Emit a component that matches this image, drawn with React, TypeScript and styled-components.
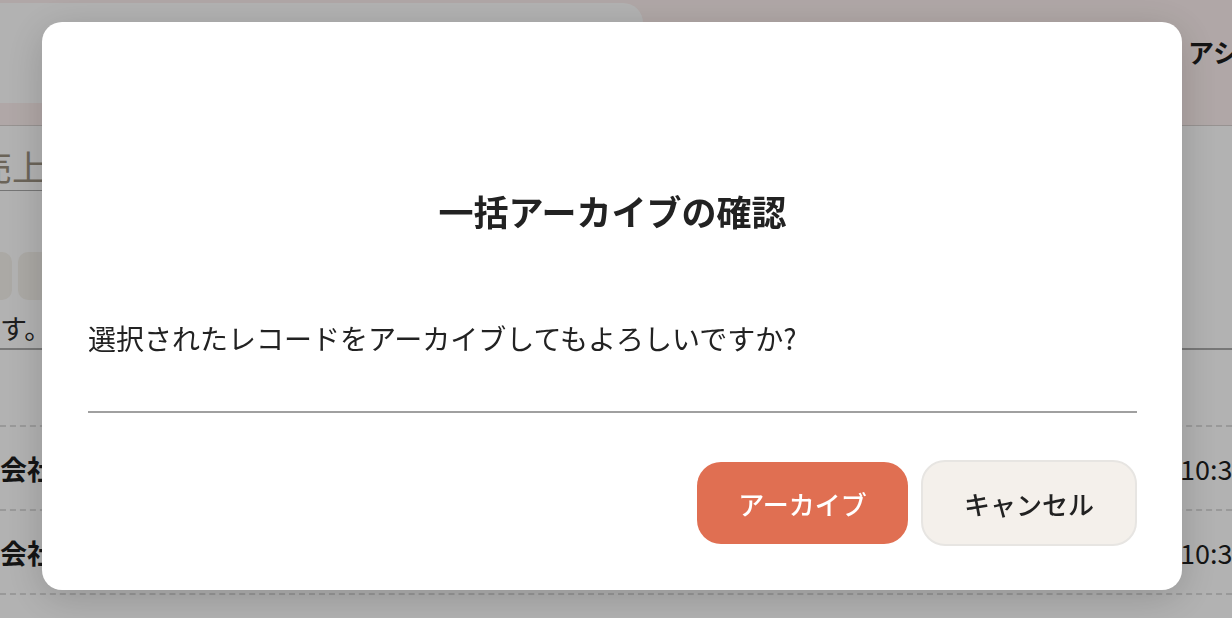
import React from "react";
import styled, { createGlobalStyle } from "styled-components";

const GlobalStyle = createGlobalStyle`
  html, body { margin: 0; padding: 0; }
  body {
    font-family: "Noto Sans CJK JP", "Noto Sans", sans-serif;
    color: #222;
    overflow: hidden;
    background: #fff;
  }
  * { box-sizing: border-box; }
`;

const Page = styled.div`
  width: 1232px;
  height: 618px;
  overflow: hidden;
  background: #fff;
  display: flex;
  flex-direction: column;
`;

const Header = styled.header`
  height: 126px;
  flex-shrink: 0;
  background: #fdf0ef;
  border-bottom: 1px solid #d8d2d0;
  padding-top: 3px;
  display: grid;
  grid-template-columns: 1188px 1fr;
`;

const HeaderCard = styled.div`
  width: 643px;
  height: 100px;
  background: #fff;
  border-radius: 0 20px 20px 0;
`;

const HeaderTitle = styled.div`
  font-size: 26px;
  font-weight: 700;
  line-height: 40px;
  margin-top: 29px;
  white-space: nowrap;
  color: #1e1e1e;
`;

const Content = styled.main`
  display: flex;
  flex-direction: column;
`;

const SearchField = styled.div`
  margin-top: 16px;
  margin-left: -23px;
  width: 500px;
  height: 49px;
  border-bottom: 1px solid #a8a8a8;
  font-size: 35px;
  line-height: 48px;
  color: #9a9080;
  white-space: nowrap;
`;

const ChipRow = styled.div`
  margin-top: 61px;
  margin-left: -40px;
  display: flex;
  gap: 6px;
`;

const Chip = styled.div`
  width: 52px;
  height: 48px;
  border-radius: 10px;
  background: #f5f2ec;
`;

const Notice = styled.p`
  margin: 8px 0 0;
  font-size: 27px;
  line-height: 40px;
  color: #2a2a2a;
  border-bottom: 2px solid #ababab;
  white-space: nowrap;
`;

const TableHead = styled.div`
  height: 77px;
  border-bottom: 2px dashed #dcdcdc;
`;

const Row = styled.div`
  height: 84px;
  border-bottom: 2px dashed #dcdcdc;
  display: grid;
  grid-template-columns: 1180px 1fr;
  align-items: center;
  font-size: 27px;
  white-space: nowrap;
  color: #1e1e1e;
`;

const Company = styled.span`
  font-weight: 700;
`;

const Time = styled.span`
  font-weight: 400;
`;

const Overlay = styled.div`
  position: fixed;
  inset: 0;
  background: rgba(0, 0, 0, 0.3);
  display: flex;
  padding: 22px 50px 28px 42px;
`;

const Modal = styled.div`
  flex: 1;
  background: #fff;
  border-radius: 20px;
  box-shadow: 0 8px 40px rgba(0, 0, 0, 0.18);
  padding: 0 45px 44px 46px;
  display: flex;
  flex-direction: column;
`;

const Title = styled.h2`
  margin: 164px 0 0;
  font-size: 35px;
  line-height: 50px;
  font-weight: 700;
  text-align: center;
  color: #222;
`;

const Message = styled.p`
  margin: 82px 0 0;
  font-size: 28px;
  line-height: 40px;
  font-weight: 400;
  color: #222;
`;

const Divider = styled.hr`
  margin: 53px 0 0;
  border: none;
  height: 2px;
  background: #a0a0a0;
`;

const Actions = styled.div`
  margin-top: 47px;
  display: flex;
  justify-content: flex-end;
  align-items: center;
  gap: 13px;
`;

const Button = styled.button<{ $variant: "primary" | "secondary" }>`
  font-family: inherit;
  font-size: 26px;
  font-weight: 500;
  cursor: pointer;
  display: flex;
  align-items: center;
  justify-content: center;
  border-radius: 24px;
  padding: 0;
  ${({ $variant }) =>
    $variant === "primary"
      ? `
    width: 211px;
    height: 82px;
    background: #e06f52;
    color: #fff;
    border: none;
  `
      : `
    width: 216px;
    height: 86px;
    background: #f4f0eb;
    color: #222;
    border: 2px solid #e7e5e2;
  `}
`;

export default function App() {
  return (
    <>
      <GlobalStyle />
      <Page>
        <Header>
          <HeaderCard />
          <HeaderTitle>アシスタント</HeaderTitle>
        </Header>
        <Content>
          <SearchField>売上で検索</SearchField>
          <ChipRow>
            <Chip />
            <Chip />
          </ChipRow>
          <Notice>す。</Notice>
          <TableHead />
          <Row>
            <Company>会社A</Company>
            <Time>10:30</Time>
          </Row>
          <Row>
            <Company>会社B</Company>
            <Time>10:30</Time>
          </Row>
        </Content>
      </Page>
      <Overlay>
        <Modal role="dialog" aria-modal="true">
          <Title>一括アーカイブの確認</Title>
          <Message>選択されたレコードをアーカイブしてもよろしいですか?</Message>
          <Divider />
          <Actions>
            <Button $variant="primary">アーカイブ</Button>
            <Button $variant="secondary">キャンセル</Button>
          </Actions>
        </Modal>
      </Overlay>
    </>
  );
}
